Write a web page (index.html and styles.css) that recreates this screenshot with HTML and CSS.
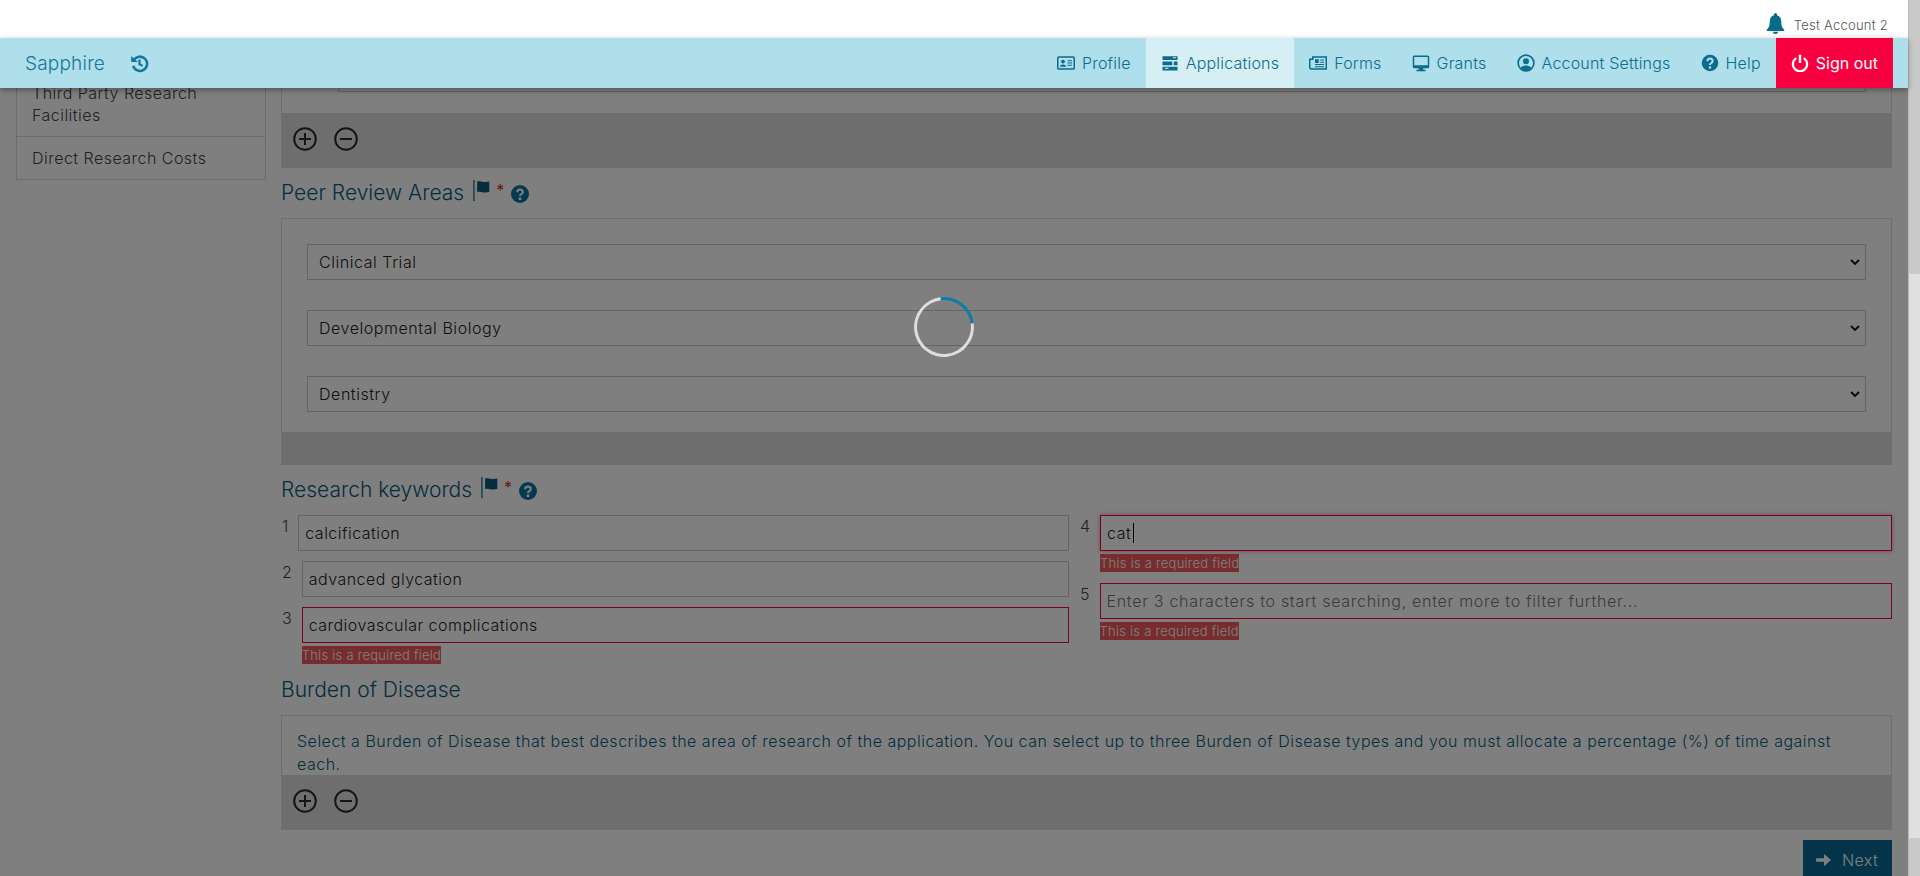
FILE: index.html
```html
<!DOCTYPE html>
<html lang="en">
<head>
    <meta charset="UTF-8">
    <meta name="viewport" content="width=device-width, initial-scale=1.0">
    <title>Sapphire</title>
    <link rel="stylesheet" href="styles.css">
</head>
<body>
    <div class="shell">
        <div class="app">
            <div class="topbar">
                <svg class="bell" viewBox="0 0 20 24"><path d="M10 0a1.8 1.8 0 0 0-1.8 1.8v.9C5 3.500 3.400 6.400 3.400 10c0 5-1.200 7-3.400 9.200V20.500h20v-1.300C17.800 17 16.600 15 16.600 10c0-3.600-1.600-6.500-4.800-7.300v-.9A1.800 1.800 0 0 0 10 0zM7 21.500a3 2.500 0 0 0 6 0z"/></svg>
                <span>Test Account 2</span>
            </div>
            <nav class="navbar">
                <div class="brand">
                    <span>Sapphire</span>
                    <svg class="history" viewBox="0 0 24 24"><path d="M5 7.500A9 9 0 1 1 4 15" fill="none" stroke="currentColor" stroke-width="3.200"/><path d="M1.500 2.500l8.500 7.500H1.500z"/><path d="M12 7v6l4 2" fill="none" stroke="currentColor" stroke-width="2.800"/></svg>
                </div>
                <ul class="menu">
                    <li><svg viewBox="0 0 24 24"><rect x="1" y="4" width="22" height="16" rx="1.500" fill="none" stroke="currentColor" stroke-width="2"/><circle cx="8" cy="10" r="2.500"/><path d="M4 17c0-4 8-4 8 0z"/><path d="M14 9h6M14 12h6M14 15h6" stroke="currentColor" stroke-width="1.500"/></svg>Profile</li>
                    <li class="active"><svg viewBox="0 0 24 24"><path d="M2 3h20v5H2zM2 10h13v5H2zM17 10h5v5h-5zM2 17h20v5H2z"/><path d="M16 5h4M5 19h5" stroke="#d5eff5" stroke-width="1.500"/></svg>Applications</li>
                    <li><svg viewBox="0 0 24 24"><path d="M5 4h18v16H3a2 2 0 0 1-2-2V7h4z" fill="none" stroke="currentColor" stroke-width="2"/><path d="M8 7h5v5H8z"/><path d="M15 8h5M15 11h5M8 14h12M8 17h12" stroke="currentColor" stroke-width="1.500"/></svg>Forms</li>
                    <li><svg viewBox="0 0 24 24"><path d="M3 2h18a2 2 0 0 1 2 2v13a2 2 0 0 1-2 2h-6v2h3v2H6v-2h3v-2H3a2 2 0 0 1-2-2V4a2 2 0 0 1 2-2zm0 2v11h18V4z"/></svg>Grants</li>
                    <li><svg viewBox="0 0 24 24"><circle cx="12" cy="12" r="10.500" fill="none" stroke="currentColor" stroke-width="2.200"/><circle cx="12" cy="9.500" r="4"/><path d="M5 19c1-5 13-5 14 0a10 10 0 0 1-14 0z"/></svg>Account Settings</li>
                    <li><svg viewBox="0 0 24 24"><circle cx="12" cy="12" r="11"/><path d="M8.500 9.500c0-4.500 7-4.500 7 0 0 2.500-3.500 2.500-3.500 5" fill="none" stroke="#aedfea" stroke-width="2.600"/><path d="M10.500 16.500h3v3h-3z" fill="#aedfea"/></svg>Help</li>
                    <li class="signout"><svg viewBox="0 0 24 24"><path d="M7 5.500a9.500 9.500 0 1 0 10 0" fill="none" stroke="currentColor" stroke-width="3"/><path d="M12 1v11" stroke="currentColor" stroke-width="3.200"/></svg>Sign out</li>
                </ul>
            </nav>

            <div class="page">
                <aside class="sidebar">
                    <div class="side-item">Third Party Research<br>Facilities</div>
                    <div class="side-item">Direct Research Costs</div>
                </aside>

                <main class="content">
                    <section class="panel first-panel">
                        <div class="stub"></div>
                        <div class="panel-bar">
                            <svg class="round-btn" viewBox="0 0 24 24"><circle cx="12" cy="12" r="10.800"/><path d="M12 6v12M6 12h12"/></svg>
                            <svg class="round-btn" viewBox="0 0 24 24"><circle cx="12" cy="12" r="10.800"/><path d="M6 12h12"/></svg>
                        </div>
                    </section>

                    <h3 class="section-title">Peer Review Areas
                        <svg class="flag" viewBox="0 0 22 26"><path d="M1 0v26" stroke="currentColor" stroke-width="1.500"/><path d="M5 2c5-2 7 2 15 0v13c-8 2-10-2-15 0z"/></svg>
                        <span class="star">*</span>
                        <svg class="help" viewBox="0 0 24 24"><circle cx="12" cy="12" r="12"/><path d="M8.300 9.500c0-4.800 7.400-4.800 7.400 0 0 2.600-3.700 2.600-3.700 5" fill="none" stroke="#fff" stroke-width="2.800"/><path d="M10.300 16.600h3.400v3.400h-3.400z" fill="#fff"/></svg>
                    </h3>
                    <section class="panel">
                        <div class="select-list">
                            <select class="field"><option>Clinical Trial</option></select>
                            <select class="field"><option>Developmental Biology</option></select>
                            <select class="field"><option>Dentistry</option></select>
                        </div>
                        <div class="panel-bar short"></div>
                    </section>

                    <h3 class="section-title">Research keywords
                        <svg class="flag" viewBox="0 0 22 26"><path d="M1 0v26" stroke="currentColor" stroke-width="1.500"/><path d="M5 2c5-2 7 2 15 0v13c-8 2-10-2-15 0z"/></svg>
                        <span class="star">*</span>
                        <svg class="help" viewBox="0 0 24 24"><circle cx="12" cy="12" r="12"/><path d="M8.300 9.500c0-4.800 7.400-4.800 7.400 0 0 2.600-3.700 2.600-3.700 5" fill="none" stroke="#fff" stroke-width="2.800"/><path d="M10.300 16.600h3.400v3.400h-3.400z" fill="#fff"/></svg>
                    </h3>
                    <div class="keywords">
                        <div class="keyword-col">
                            <div class="keyword">
                                <span class="num">1</span>
                                <div class="control"><input class="field" type="text" value="calcification"></div>
                            </div>
                            <div class="keyword">
                                <span class="num">2</span>
                                <div class="control"><input class="field" type="text" value="advanced glycation"></div>
                            </div>
                            <div class="keyword">
                                <span class="num">3</span>
                                <div class="control">
                                    <input class="field invalid" type="text" value="cardiovascular complications">
                                    <span class="error">This is a required field</span>
                                </div>
                            </div>
                        </div>
                        <div class="keyword-col wide-gap">
                            <div class="keyword">
                                <span class="num">4</span>
                                <div class="control">
                                    <input class="field invalid focused" type="text" value="cat">
                                    <i class="caret"></i>
                                    <span class="error">This is a required field</span>
                                </div>
                            </div>
                            <div class="keyword">
                                <span class="num">5</span>
                                <div class="control">
                                    <input class="field invalid" type="text" placeholder="Enter 3 characters to start searching, enter more to filter further...">
                                    <span class="error">This is a required field</span>
                                </div>
                            </div>
                        </div>
                    </div>

                    <h3 class="section-title">Burden of Disease</h3>
                    <section class="panel">
                        <div class="panel-text">Select a Burden of Disease that best describes the area of research of the application. You can select up to three Burden of Disease types and you must allocate a percentage (%) of time against each.</div>
                        <div class="panel-bar">
                            <svg class="round-btn" viewBox="0 0 24 24"><circle cx="12" cy="12" r="10.800"/><path d="M12 6v12M6 12h12"/></svg>
                            <svg class="round-btn" viewBox="0 0 24 24"><circle cx="12" cy="12" r="10.800"/><path d="M6 12h12"/></svg>
                        </div>
                    </section>

                    <div class="actions">
                        <button class="next" type="button">
                            <svg viewBox="0 0 18 16"><path d="M0 6h9V1l8 7-8 7v-5H0z"/></svg>Next
                        </button>
                    </div>
                </main>

                <div class="overlay"><div class="spinner"></div></div>
            </div>
        </div>
        <div class="scrollbar">
            <div class="thumb"></div>
            <div class="track"></div>
            <div class="thumb bottom"></div>
        </div>
    </div>
</body>
</html>
```

FILE: styles.css
```css
* {
    box-sizing: border-box;
}

body {
    margin: 0;
    height: 876px;
    overflow: hidden;
    background-color: #fff;
    font-family: 'Inter', 'Open Sans', sans-serif;
    font-weight: 300;
    font-size: 16px;
    color: #444;
}

.shell {
    display: flex;
    height: 876px;
}

.app {
    flex: 1;
    min-width: 0;
    display: flex;
    flex-direction: column;
}

/* top strip */
.topbar {
    height: 38px;
    display: flex;
    justify-content: flex-end;
    align-items: center;
    gap: 9px;
    padding: 11px 20px 0 0;
    font-size: 13px;
    letter-spacing: 0.25px;
    color: #555;
}

.bell {
    width: 19px;
    height: 21px;
    margin-top: -3px;
    fill: #0a6a8c;
}

/* nav */
.navbar {
    position: relative;
    z-index: 3;
    height: 50px;
    flex: none;
    display: flex;
    justify-content: space-between;
    padding: 0 15px 0 25px;
    background-color: #aedfea;
    color: #0b6c8e;
    box-shadow: 0 2px 6px rgba(0, 0, 0, 0.35);
}

.brand {
    display: flex;
    align-items: center;
    gap: 25px;
    font-size: 19px;
    letter-spacing: 0.2px;
    color: #16779b;
}

.history {
    width: 19px;
    height: 19px;
    fill: currentColor;
}

.menu {
    display: flex;
    margin: 0;
    padding: 0;
    list-style: none;
    font-size: 16px;
    letter-spacing: 0.2px;
}

.menu li {
    display: flex;
    align-items: center;
    gap: 7px;
    padding: 0 15px;
}

.menu svg {
    width: 18px;
    height: 18px;
    fill: currentColor;
}

.menu .active {
    background-color: #d5eff5;
}

.menu .signout {
    background-color: #f80040;
    color: #fff;
    font-weight: 400;
    letter-spacing: 0;
}

/* page */
.page {
    position: relative;
    flex: 1;
    min-height: 0;
    overflow: hidden;
    display: flex;
    gap: 15px;
    padding: 0 16px;
}

.sidebar {
    width: 250px;
    flex: none;
    align-self: flex-start;
    margin-top: -16px;
    border: 1px solid #d8d8d8;
    border-top: none;
}

.side-item {
    padding: 10px 15px;
    line-height: 22px;
    letter-spacing: 0.47px;
    color: #444;
}

.side-item + .side-item {
    border-top: 1px solid #d8d8d8;
}

.content {
    flex: 1;
    min-width: 0;
    margin-top: -8px;
}

.panel {
    border: 1px solid #dedede;
    border-bottom: none;
}

.first-panel {
    border-top: none;
}

.stub {
    height: 12px;
    margin: 0 25px 21px 56px;
    border: 1px solid #ccc;
    border-top: none;
}

.panel-bar {
    height: 55px;
    margin: 0 -1px;
    display: flex;
    align-items: center;
    gap: 17px;
    padding: 0 0 4px 12px;
    background-color: #dcdcdc;
}

.panel-bar.short {
    height: 33px;
}

.round-btn {
    width: 24px;
    height: 24px;
    fill: none;
    stroke: #2a2a2a;
    stroke-width: 2;
}

.section-title {
    height: 50px;
    margin: 0;
    padding-bottom: 2px;
    display: flex;
    align-items: center;
    font-size: 21px;
    font-weight: 300;
    color: #0a5a7c;
}

.flag {
    width: 18px;
    height: 21px;
    margin: -4px 0 0 9px;
    fill: currentColor;
}

.star {
    margin: -4px 0 0 5px;
    color: #d81f1f;
    font-size: 16px;
    font-weight: 400;
}

.help {
    width: 18px;
    height: 18px;
    margin: 4px 0 0 7px;
    fill: #06749f;
}

.select-list {
    display: flex;
    flex-direction: column;
    gap: 30px;
    padding: 25px 25px 20px;
}

.field {
    display: block;
    width: 100%;
    height: 36px;
    padding: 0 6px;
    border: 1px solid #c8c8c8;
    background-color: transparent;
    font-family: inherit;
    font-weight: 300;
    font-size: 16px;
    letter-spacing: 0.47px;
    color: #222;
    outline: none;
    border-radius: 0;
}

select.field {
    padding: 0 11px;
    letter-spacing: 0.55px;
    appearance: none;
    background-image: url("data:image/svg+xml,%3Csvg xmlns='http://www.w3.org/2000/svg' viewBox='0 0 10 7'%3E%3Cpath d='M1 1l4 4 4-4' fill='none' stroke='%23111' stroke-width='1.900'/%3E%3C/svg%3E");
    background-repeat: no-repeat;
    background-position: right 5px center;
    background-size: 10px 7px;
}

.field::placeholder {
    color: #777;
    letter-spacing: 0.7px;
}

.invalid {
    border-color: #f50040;
}

.focused {
    box-shadow: 0 0 5px rgba(245, 0, 64, 0.5);
}

/* keywords */
.keywords {
    display: grid;
    grid-template-columns: 787px 1fr;
    column-gap: 11px;
    padding: 0 0 1px 1px;
}

.keyword-col {
    display: flex;
    flex-direction: column;
    gap: 10px;
}

.wide-gap {
    gap: 11px;
}

.keyword {
    display: flex;
    gap: 10px;
}

.num {
    line-height: 22px;
    font-size: 16px;
}

.control {
    position: relative;
    flex: 1;
    min-width: 0;
}

.caret {
    position: absolute;
    left: 33px;
    top: 8px;
    width: 1px;
    height: 20px;
    background-color: #000;
}

.error {
    display: table;
    height: 18px;
    margin-top: 3px;
    line-height: 18px;
    background-color: #ee5a5a;
    color: #fff;
    font-size: 13px;
    letter-spacing: 0.25px;
}

.panel-text {
    height: 59px;
    overflow: hidden;
    padding: 14px 40px 0 15px;
    line-height: 23px;
    letter-spacing: 0.5px;
    color: #0a5a7c;
}

.actions {
    display: flex;
    justify-content: flex-end;
    margin-top: 10px;
}

.next {
    display: flex;
    align-items: center;
    gap: 10px;
    width: 89px;
    height: 40px;
    padding: 0 13px;
    border: none;
    background-color: #066894;
    color: #fff;
    font-family: inherit;
    font-size: 16px;
    font-weight: 300;
    letter-spacing: 0.4px;
}

.next svg {
    width: 16px;
    height: 14px;
    fill: currentColor;
}

/* loading */
.overlay {
    position: absolute;
    inset: 0;
    z-index: 2;
    background-color: rgba(0, 0, 0, 0.5);
}

.spinner {
    position: absolute;
    left: 914px;
    top: 209px;
    width: 60px;
    height: 60px;
    border: 3px solid #dedede;
    border-top-color: #0a7ea8;
    border-radius: 50%;
    transform: rotate(38deg);
}

.scrollbar {
    width: 12px;
    flex: none;
    display: flex;
    flex-direction: column;
    background-color: #e0e0e0;
    border-left: 1px solid #bbb;
}

.thumb {
    height: 274px;
    background-color: #c9c9c9;
}

.thumb.bottom {
    height: 38px;
}

.track {
    flex: 1;
}
```
